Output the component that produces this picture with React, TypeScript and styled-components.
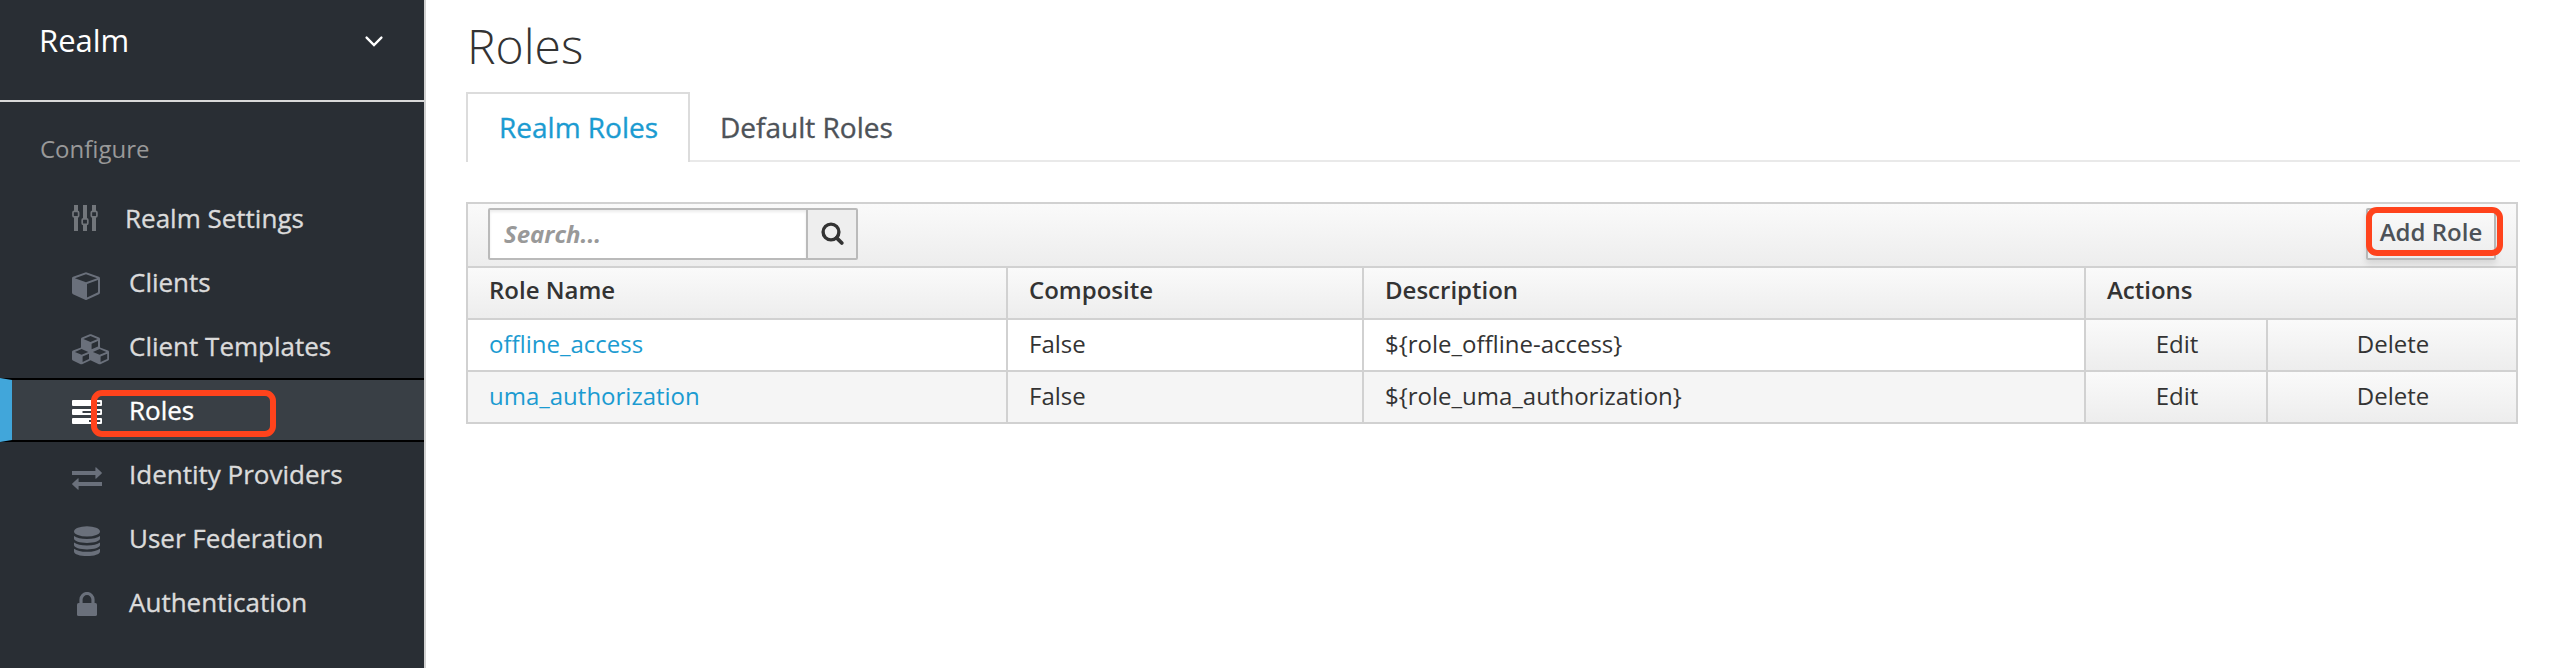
import React from 'react';
import styled, { createGlobalStyle, css } from 'styled-components';

const GlobalStyle = createGlobalStyle`
  *, *::before, *::after { box-sizing: border-box; }
  body {
    margin: 0;
    background: #fff;
    color: #333;
    font-family: 'Open Sans', 'Noto Sans', sans-serif;
    font-size: 24px;
    -webkit-font-smoothing: antialiased;
  }
`;

const raised = css`
  background: linear-gradient(to bottom, #fafafa 0%, #ededed 100%);
`;

const Page = styled.div`
  display: flex;
  height: 668px;
  overflow: hidden;
`;

const Sidebar = styled.aside`
  flex: none;
  width: 426px;
  background: #292e34;
  border-right: 2px solid #d1d1d1;
`;

const RealmSelector = styled.div`
  display: flex;
  align-items: flex-start;
  justify-content: space-between;
  height: 102px;
  padding: 0 40px 0 39px;
  border-bottom: 2px solid #d9d9d9;
  color: #fff;
  font-size: 31px;
  line-height: 80px;

  svg { margin-top: 35px; }
`;

const SectionTitle = styled.h2`
  margin: 0;
  padding: 27px 0 0 40px;
  height: 84px;
  color: #999;
  font-size: 24px;
  font-weight: 400;
  line-height: 40px;
`;

const Nav = styled.nav`
  display: flex;
  flex-direction: column;
`;

const NavItem = styled.a<{ $active?: boolean }>`
  position: relative;
  display: flex;
  align-items: center;
  height: 64px;
  padding-left: 60px;
  border: 0 solid transparent;
  border-width: 2px 0 2px 12px;
  color: ${p => (p.$active ? '#fff' : '#dbdbdb')};
  font-size: 26px;
  line-height: 60px;
  -webkit-text-stroke: 0.35px currentColor;
  ${p =>
    p.$active &&
    css`
      background: #393f45;
      border-color: #000 transparent #000 #41a6da;
    `}
`;

const IconSlot = styled.span<{ $width: number; $drop: number; $indent: number; $color: string }>`
  display: flex;
  align-items: center;
  width: ${p => p.$width}px;
  padding-top: ${p => p.$drop}px;
  padding-left: ${p => p.$indent}px;
  color: ${p => p.$color};
`;

const Highlight = styled.span<{ $x: number; $y: number; $w: number; $h: number }>`
  position: absolute;
  left: ${p => p.$x}px;
  top: ${p => p.$y}px;
  width: ${p => p.$w}px;
  height: ${p => p.$h}px;
  border: 6px solid #ff431c;
  border-radius: 11px;
  pointer-events: none;
`;

const Main = styled.main`
  flex: 1;
  min-width: 0;
  padding: 13px 38px 0 40px;
`;

const Title = styled.h1`
  margin: 0;
  padding-left: 1px;
  height: 79px;
  font-size: 48px;
  font-weight: 300;
  line-height: 65px;
`;

const Tabs = styled.div`
  display: flex;
  height: 70px;
  border-bottom: 2px solid #e9e9e9;
`;

const Tab = styled.a<{ $active?: boolean }>`
  height: 70px;
  padding: 0 28px;
  border: 2px solid transparent;
  border-bottom: 0;
  color: #4d5258;
  font-size: 28px;
  line-height: 66px;
  white-space: nowrap;
  -webkit-text-stroke: 0.35px currentColor;
  ${p =>
    p.$active &&
    css`
      width: 224px;
      padding: 0 31px;
      background: #fff;
      border-color: #dcdcdc;
      color: #1b9bd1;
    `}
`;

const Panel = styled.section`
  width: 2052px;
  margin-top: 40px;
  border: 2px solid #d1d1d1;
`;

const Toolbar = styled.div`
  ${raised}
  display: flex;
  justify-content: space-between;
  height: 62px;
  padding: 4px 20px 0;
`;

const SearchBox = styled.div`
  display: flex;
  width: 370px;
  height: 52px;
  border: 2px solid #bababa;
  border-radius: 2px;
  background: #fff;
`;

const SearchInput = styled.div`
  flex: 1;
  padding-left: 14px;
  box-shadow: inset 0 2px 3px rgba(0, 0, 0, 0.08);
  color: #999;
  font-style: italic;
  font-weight: 700;
  line-height: 48px;
`;

const SearchButton = styled.div`
  display: flex;
  align-items: center;
  justify-content: center;
  width: 50px;
  padding-left: 2px;
  border-left: 2px solid #bababa;
  background: #eee;
`;

const AddButton = styled.div`
  ${raised}
  position: relative;
  width: 130px;
  height: 52px;
  border: 2px solid #b7b7b7;
  border-radius: 2px;
  box-shadow: 0 4px 6px rgba(3, 3, 3, 0.1);
  color: #4d5258;
  font-weight: 600;
  line-height: 44px;
  text-align: center;
  white-space: nowrap;
`;

const Row = styled.div<{ $striped?: boolean; $header?: boolean }>`
  display: grid;
  grid-template-columns: 540px 356px 722px 182px 248px;
  height: 52px;
  border-top: 2px solid #d1d1d1;
  background: ${p => (p.$striped ? '#f5f5f5' : '#fff')};
  line-height: 47px;
  ${p =>
    p.$header &&
    css`
      ${raised}
      font-weight: 600;
      line-height: 43px;
    `}
`;

const Cell = styled.div<{ $span?: number }>`
  grid-column: span ${p => p.$span ?? 1};
  height: 50px;
  padding-left: 21px;
  white-space: nowrap;

  &:not(:last-child) { border-right: 2px solid #d1d1d1; }
`;

const ActionCell = styled(Cell)`
  ${raised}
  padding-left: 2px;
  text-align: center;
`;

const RoleLink = styled.a`
  color: #1b9bd1;
`;

const ChevronDown = () => (
  <svg width="20" height="13" viewBox="0 0 20 13" fill="none" stroke="#fff" strokeWidth="2.4" strokeLinecap="round">
    <path d="M2.6 2.6 L10 10 L17.4 2.6" />
  </svg>
);

const SlidersIcon = () => (
  <svg width="26" height="26" viewBox="0 0 26 26" fill="currentColor">
    <path d="M2 0h4v6h-4zM2 12h4v14h-4zM11 0h4v14h-4zM11 20h4v6h-4zM20 0h4v6h-4zM20 12h4v14h-4z" />
    <g fill="none" stroke="currentColor" strokeWidth="1.7">
      <rect x="1" y="6.3" width="5.6" height="5.6" rx="1.2" />
      <rect x="10.2" y="13.8" width="5.6" height="5.6" rx="1.2" />
      <rect x="19.3" y="6.3" width="5.6" height="5.6" rx="1.2" />
    </g>
  </svg>
);

const CubeIcon = () => (
  <svg width="28" height="28" viewBox="0 0 28 28" fill="currentColor" fillRule="evenodd">
    <path d="M13.2 .4Q14 .1 14.8 .4L26.9 4.8Q28 5.2 28 6.4V20.6Q28 21.6 27 22.2L14.9 27.8Q14 28.2 13.1 27.8L1 22.2Q0 21.6 0 20.6V6.4Q0 5.2 1.1 4.8ZM14 2.2L2.9 6.2L14 10.3L25.1 6.2ZM15 12.1V25.4L26 20.3V8.1Z" />
  </svg>
);

const CubesIcon = () => (
  <svg width="37" height="31" viewBox="0 0 37 31" fill="currentColor" fillRule="evenodd">
    <path d="M17.8 .3Q18.5 0 19.2 .3L27 3.5Q28 3.9 28 5V13.4L36 16.6Q37 17 37 18V25.2Q37 26.1 36.1 26.6L28.4 30.2Q27.6 30.5 26.9 30.2L18.5 26.2L10.1 30.2Q9.4 30.5 8.6 30.2L.9 26.6Q0 26.1 0 25.2V18Q0 17 1 16.6L9 13.4V5Q9 3.9 10 3.5ZM18.5 2.1L11.4 4.9L18.5 7.9L25.6 4.9ZM19.6 9.7V15.2L26 12.5V6.9ZM9.6 15.1L2.9 17.9L9.6 20.7L16.3 17.9ZM10.6 22.5V28L17 25V19.7ZM27.6 15.1L20.9 17.9L27.6 20.7L34.3 17.9ZM28.6 22.5V28L35.2 25V19.7Z" />
  </svg>
);

const TasksIcon = () => (
  <svg width="30" height="24" viewBox="0 0 30 24" fill="currentColor" fillRule="evenodd">
    <path d="M1 0H29Q30 0 30 1V5Q30 6 29 6H1Q0 6 0 5V1Q0 0 1 0ZM20 2.2V4H28.2V2.2Z" />
    <path d="M1 9H29Q30 9 30 10V14Q30 15 29 15H1Q0 15 0 14V10Q0 9 1 9ZM10.5 11.1V12.9H28.2V11.1Z" />
    <path d="M1 18H29Q30 18 30 19V23Q30 24 29 24H1Q0 24 0 23V19Q0 18 1 18ZM17 20.1V21.9H28.2V20.1Z" />
  </svg>
);

const ExchangeIcon = () => (
  <svg width="30" height="23" viewBox="0 0 30 23" fill="currentColor">
    <path d="M0 4H23.4V.6Q23.6 0 24.3 .4L29.7 5.5Q30.1 6 29.7 6.5L24.3 11.6Q23.6 12 23.4 11.4V8H0ZM30 15H6.6V11.6Q6.4 11 5.7 11.4L.3 16.5Q-.1 17 .3 17.5L5.7 22.6Q6.4 23 6.6 22.4V19H30Z" />
  </svg>
);

const DatabaseIcon = () => (
  <svg width="26" height="30" viewBox="0 0 26 30" fill="currentColor">
    <ellipse cx="13" cy="5.4" rx="13" ry="5.2" />
    <path d="M0 10Q4 13 13 13T26 10V12.6C26 15.2 20 17 13 17S0 15.2 0 12.6Z" />
    <path d="M0 16.4Q4 19.4 13 19.4T26 16.4V19C26 21.6 20 23.4 13 23.4S0 21.6 0 19Z" />
    <path d="M0 22.7Q4 25.8 13 25.8T26 22.7V25.4C26 28.2 20 30 13 30S0 28.2 0 25.4Z" />
  </svg>
);

const LockIcon = () => (
  <svg width="20" height="24" viewBox="0 0 20 24" fill="currentColor">
    <rect x="0" y="11" width="20" height="13" rx="1.6" />
    <path d="M4 11.5V7.5A6 6 0 0 1 16 7.5V11.5" fill="none" stroke="currentColor" strokeWidth="3.2" />
  </svg>
);

const SearchIcon = () => (
  <svg width="24" height="24" viewBox="0 0 24 24" fill="none" stroke="#333">
    <circle cx="10" cy="10" r="7.9" strokeWidth="3.4" />
    <path d="M15.6 15.8L20.8 21" strokeWidth="3.8" strokeLinecap="round" />
  </svg>
);

const navItems = [
  { label: 'Realm Settings', icon: <SlidersIcon />, slot: 53, indent: 0, drop: 0, color: '#72767b' },
  { label: 'Clients', icon: <CubeIcon />, slot: 57, indent: 0, drop: 8, color: '#6a707b' },
  { label: 'Client Templates', icon: <CubesIcon />, slot: 57, indent: 0, drop: 6, color: '#6a707b' },
  { label: 'Roles', icon: <TasksIcon />, slot: 57, indent: 0, drop: 4, color: '#fff', active: true },
  { label: 'Identity Providers', icon: <ExchangeIcon />, slot: 57, indent: 0, drop: 8, color: '#6a707b' },
  { label: 'User Federation', icon: <DatabaseIcon />, slot: 57, indent: 2, drop: 6, color: '#6a707b' },
  { label: 'Authentication', icon: <LockIcon />, slot: 57, indent: 5, drop: 4, color: '#6a707b' },
];

const roles = [
  { name: 'offline_access', composite: 'False', description: '${role_offline-access}' },
  { name: 'uma_authorization', composite: 'False', description: '${role_uma_authorization}' },
];

export default function App() {
  return (
    <>
      <GlobalStyle />
      <Page>
        <Sidebar>
          <RealmSelector>
            <span>Realm</span>
            <ChevronDown />
          </RealmSelector>
          <SectionTitle>Configure</SectionTitle>
          <Nav>
            {navItems.map(item => (
              <NavItem key={item.label} $active={item.active}>
                <IconSlot $width={item.slot} $drop={item.drop} $color={item.color} $indent={item.indent}>
                  {item.icon}
                </IconSlot>
                {item.label}
                {item.active && <Highlight $x={79} $y={10} $w={185} $h={47} />}
              </NavItem>
            ))}
          </Nav>
        </Sidebar>
        <Main>
          <Title>Roles</Title>
          <Tabs>
            <Tab $active>Realm Roles</Tab>
            <Tab>Default Roles</Tab>
          </Tabs>
          <Panel>
            <Toolbar>
              <SearchBox>
                <SearchInput>Search...</SearchInput>
                <SearchButton>
                  <SearchIcon />
                </SearchButton>
              </SearchBox>
              <AddButton>
                Add Role
                <Highlight $x={-2} $y={-3} $w={137} $h={49} />
              </AddButton>
            </Toolbar>
            <Row $header>
              <Cell>Role Name</Cell>
              <Cell>Composite</Cell>
              <Cell>Description</Cell>
              <Cell $span={2}>Actions</Cell>
            </Row>
            {roles.map((role, i) => (
              <Row key={role.name} $striped={i % 2 === 1}>
                <Cell>
                  <RoleLink>{role.name}</RoleLink>
                </Cell>
                <Cell>{role.composite}</Cell>
                <Cell>{role.description}</Cell>
                <ActionCell>Edit</ActionCell>
                <ActionCell>Delete</ActionCell>
              </Row>
            ))}
          </Panel>
        </Main>
      </Page>
    </>
  );
}
